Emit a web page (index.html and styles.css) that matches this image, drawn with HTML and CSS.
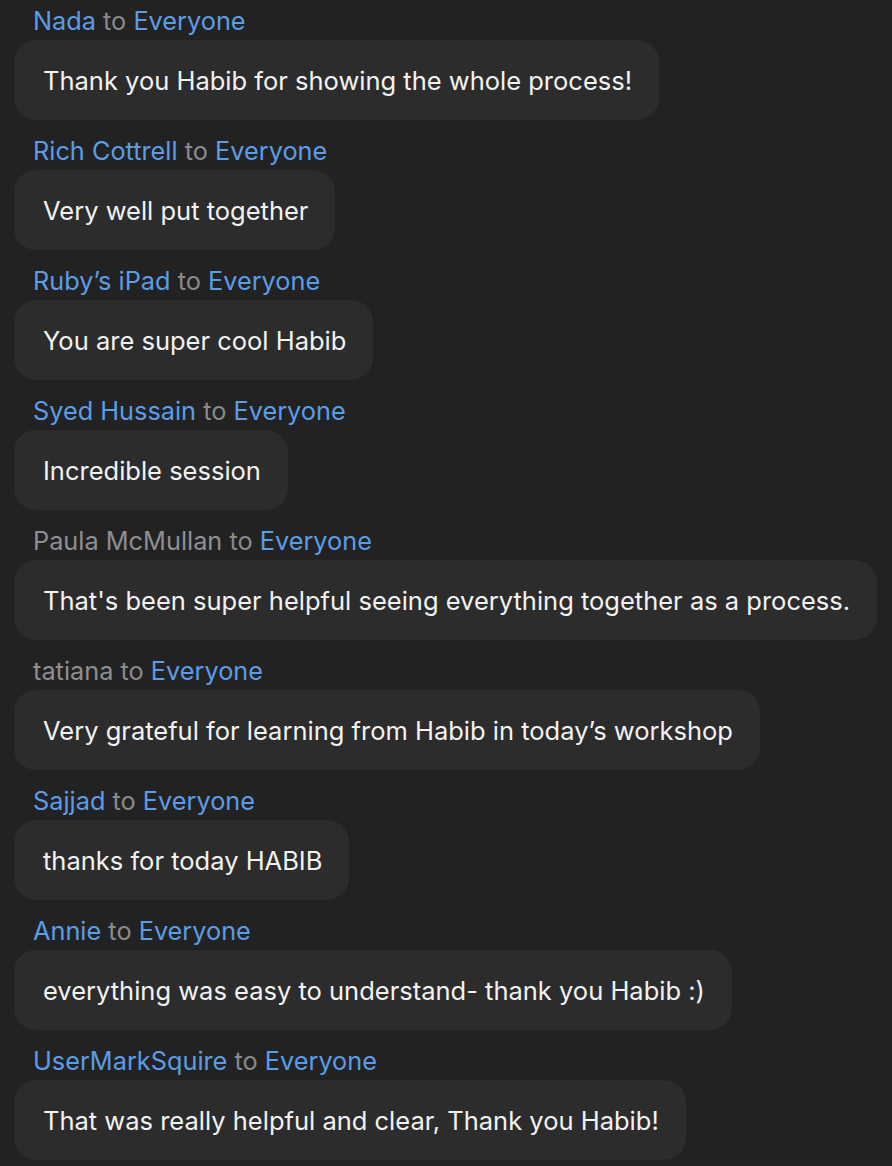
FILE: index.html
```html
<!DOCTYPE html>
<html lang="en">
<head>
    <meta charset="UTF-8">
    <title>Chat</title>
    <link rel="stylesheet" href="styles.css">
</head>
<body>

<div class="chat">
    <div class="message">
        <div class="sender"><span class="name">Nada</span> to <span class="name">Everyone</span></div>
        <div class="bubble">Thank you Habib for showing the whole process!</div>
    </div>
    <div class="message">
        <div class="sender"><span class="name">Rich Cottrell</span> to <span class="name">Everyone</span></div>
        <div class="bubble">Very well put together</div>
    </div>
    <div class="message">
        <div class="sender"><span class="name">Ruby’s iPad</span> to <span class="name">Everyone</span></div>
        <div class="bubble">You are super cool Habib</div>
    </div>
    <div class="message">
        <div class="sender"><span class="name">Syed Hussain</span> to <span class="name">Everyone</span></div>
        <div class="bubble">Incredible session</div>
    </div>
    <div class="message">
        <div class="sender"><span class="name muted">Paula McMullan</span> to <span class="name">Everyone</span></div>
        <div class="bubble">That's been super helpful seeing everything together as a process.</div>
    </div>
    <div class="message">
        <div class="sender"><span class="name muted">tatiana</span> to <span class="name">Everyone</span></div>
        <div class="bubble">Very grateful for learning from Habib in today’s workshop</div>
    </div>
    <div class="message">
        <div class="sender"><span class="name">Sajjad</span> to <span class="name">Everyone</span></div>
        <div class="bubble">thanks for today HABIB</div>
    </div>
    <div class="message">
        <div class="sender"><span class="name">Annie</span> to <span class="name">Everyone</span></div>
        <div class="bubble">everything was easy to understand- thank you Habib :)</div>
    </div>
    <div class="message">
        <div class="sender"><span class="name">UserMarkSquire</span> to <span class="name">Everyone</span></div>
        <div class="bubble">That was really helpful and clear, Thank you Habib!</div>
    </div>
</div>

</body>
</html>
```

FILE: styles.css
```css
body {
    margin: 0;
    background-color: #222222;
    font-family: Inter, "Noto Sans", sans-serif;
    overflow: hidden;
}
.chat {
    display: flex;
    flex-direction: column;
    gap: 10px;
    padding-left: 14px;
}
.message {
    display: flex;
    flex-direction: column;
    align-items: flex-start;
}
.sender {
    height: 40px;
    line-height: 42px;
    padding-left: 19px;
    font-size: 25.3px;
    color: #8a8a8c;
}
.name {
    color: #5b9de6;
}
.name.muted {
    color: #8e8e93;
}
.bubble {
    height: 80px;
    line-height: 82px;
    padding: 0 27px 0 29px;
    background-color: #2c2c2c;
    border-radius: 22px;
    color: #f2f2f2;
    font-size: 25.5px;
    white-space: nowrap;
}
```
